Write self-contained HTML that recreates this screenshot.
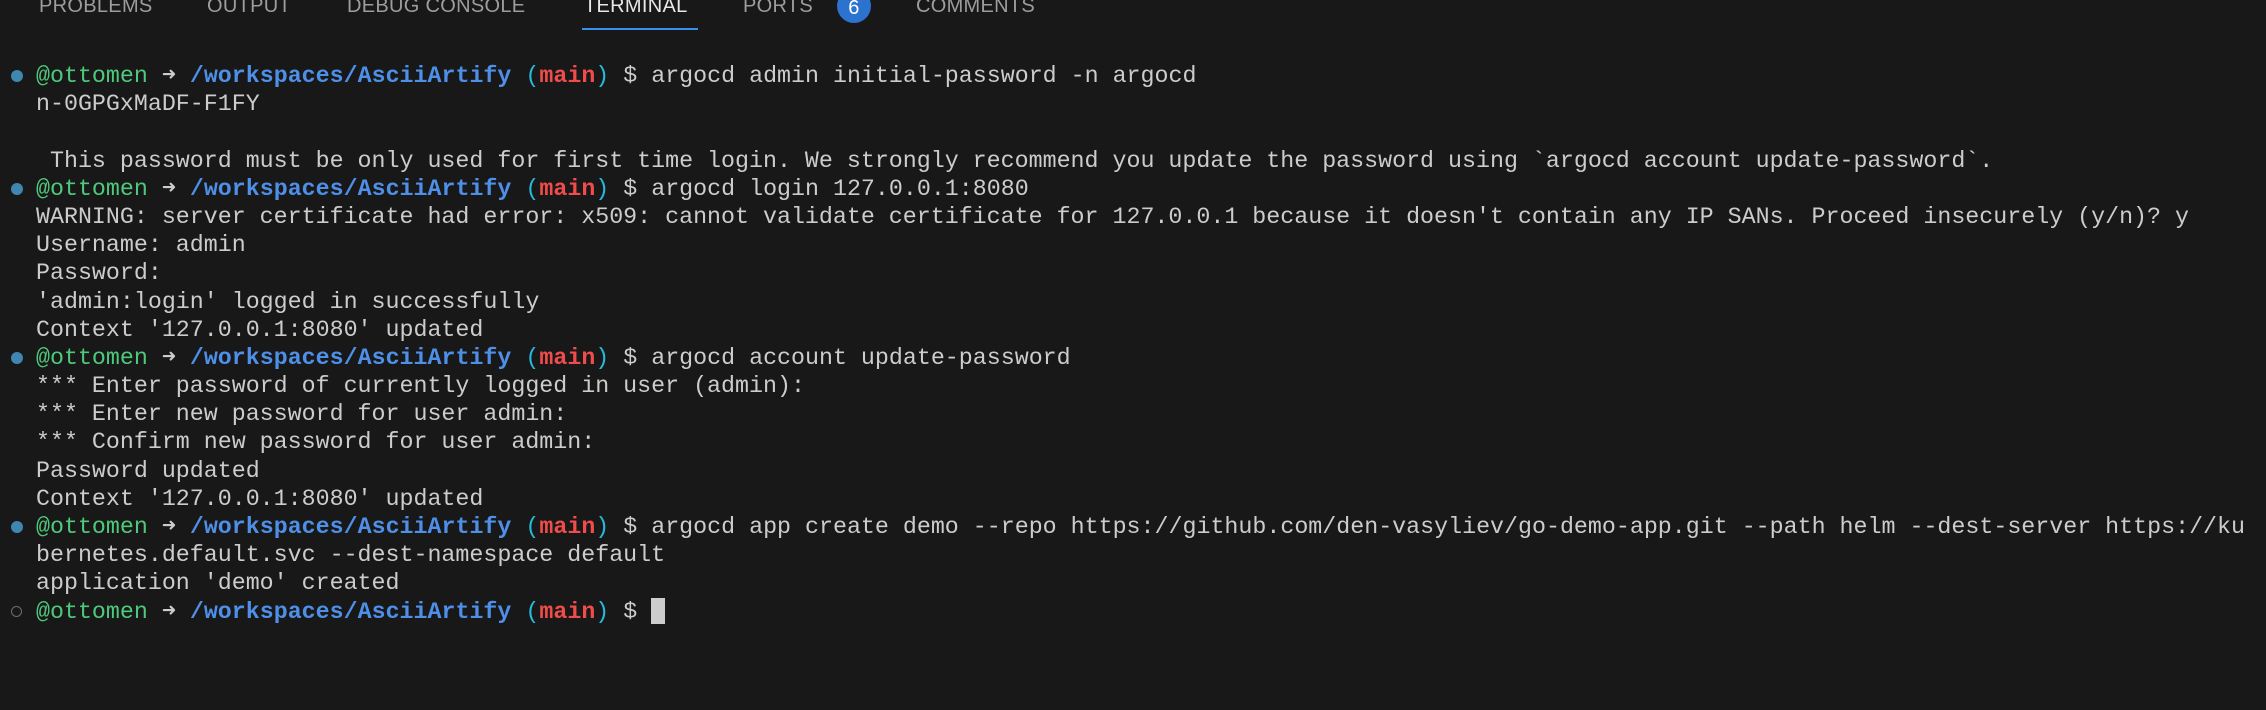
<!DOCTYPE html>
<html><head><meta charset="utf-8"><style>
html,body{margin:0;padding:0;background:#181818;width:2266px;height:710px;overflow:hidden}
.tabs{position:absolute;top:0;left:0;width:2266px;height:40px;font-family:"Liberation Sans",sans-serif;font-size:20px;color:#9d9d9d;letter-spacing:0.3px}
.tab{position:absolute;top:-5px}
.act{color:#e7e7e7}
.ul{position:absolute;left:582px;top:28px;width:116px;height:2px;background:#3b8eea}
.badge{position:absolute;left:837px;top:-11px;width:34px;height:34px;border-radius:50%;background:#2b73cf;color:#fff;text-align:center;line-height:38px;font-size:20px}
.term{position:absolute;left:36px;top:62px;font-family:"Liberation Mono","DejaVu Sans Mono",monospace;font-size:23.3px;line-height:28.2px;color:#cccccc}
.l{height:28.2px;position:relative;white-space:pre}
.g{color:#4ec97b}.b{color:#4e8fe8;font-weight:bold}.r{color:#f14c4c;font-weight:bold}.c{color:#29b8db}
.dot{position:absolute;left:-25px;top:8px;width:12px;height:12px;border-radius:50%;background:#3f86b0}
.hdot{position:absolute;left:-25px;top:8px;width:9px;height:9px;border-radius:50%;border:1.5px solid #6e6e6e}
.cur{display:inline-block;width:14px;height:26px;background:#cccccc;vertical-align:-6px}
</style></head><body>
<div class="tabs">
<span class="tab" style="left:39px">PROBLEMS</span>
<span class="tab" style="left:207px">OUTPUT</span>
<span class="tab" style="left:347px">DEBUG CONSOLE</span>
<span class="tab act" style="left:584px">TERMINAL</span>
<span class="tab" style="left:743px">PORTS</span>
<div class="badge">6</div>
<span class="tab" style="left:916px">COMMENTS</span>
<div class="ul"></div>
</div>
<div class="term"><div class="l"><span class="dot"></span><span class="g">@ottomen</span> ➜ <span class="b">/workspaces/AsciiArtify</span> <span class="c">(</span><span class="r">main</span><span class="c">)</span> $ argocd admin initial-password -n argocd</div><div class="l">n-0GPGxMaDF-F1FY</div><div class="l"> </div><div class="l"> This password must be only used for first time login. We strongly recommend you update the password using `argocd account update-password`.</div><div class="l"><span class="dot"></span><span class="g">@ottomen</span> ➜ <span class="b">/workspaces/AsciiArtify</span> <span class="c">(</span><span class="r">main</span><span class="c">)</span> $ argocd login 127.0.0.1:8080</div><div class="l">WARNING: server certificate had error: x509: cannot validate certificate for 127.0.0.1 because it doesn't contain any IP SANs. Proceed insecurely (y/n)? y</div><div class="l">Username: admin</div><div class="l">Password:</div><div class="l">'admin:login' logged in successfully</div><div class="l">Context '127.0.0.1:8080' updated</div><div class="l"><span class="dot"></span><span class="g">@ottomen</span> ➜ <span class="b">/workspaces/AsciiArtify</span> <span class="c">(</span><span class="r">main</span><span class="c">)</span> $ argocd account update-password</div><div class="l">*** Enter password of currently logged in user (admin):</div><div class="l">*** Enter new password for user admin:</div><div class="l">*** Confirm new password for user admin:</div><div class="l">Password updated</div><div class="l">Context '127.0.0.1:8080' updated</div><div class="l"><span class="dot"></span><span class="g">@ottomen</span> ➜ <span class="b">/workspaces/AsciiArtify</span> <span class="c">(</span><span class="r">main</span><span class="c">)</span> $ argocd app create demo --repo https://github.com/den-vasyliev/go-demo-app.git --path helm --dest-server https://ku</div><div class="l">bernetes.default.svc --dest-namespace default</div><div class="l">application 'demo' created</div><div class="l"><span class="hdot"></span><span class="g">@ottomen</span> ➜ <span class="b">/workspaces/AsciiArtify</span> <span class="c">(</span><span class="r">main</span><span class="c">)</span> $ <span class="cur"></span></div></div>
</body></html>
